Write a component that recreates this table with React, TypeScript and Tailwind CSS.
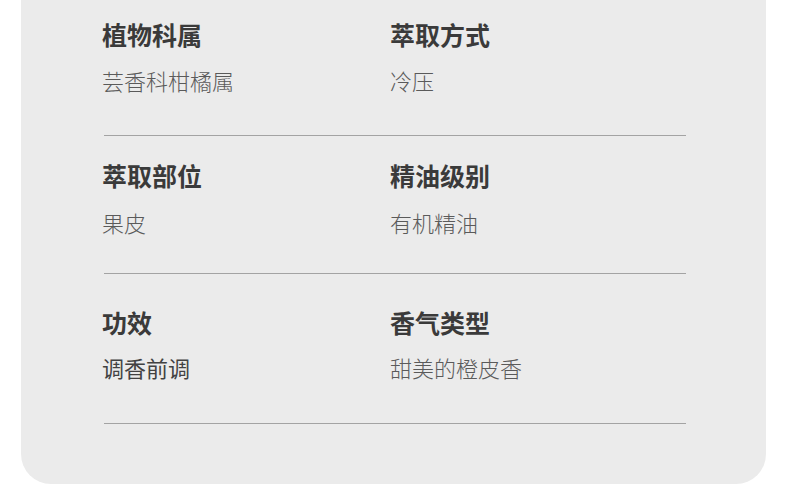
const rows = [
  {
    items: [
      { title: "植物科属", value: "芸香科柑橘属" },
      { title: "萃取方式", value: "冷压" },
    ],
    top: "pt-[16px]",
    gap: "mt-[13px]",
    bottom: "pb-[40px]",
  },
  {
    items: [
      { title: "萃取部位", value: "果皮" },
      { title: "精油级别", value: "有机精油" },
    ],
    top: "pt-[21px]",
    gap: "mt-[14px]",
    bottom: "pb-[36px]",
  },
  {
    items: [
      { title: "功效", value: "调香前调", dark: true },
      { title: "香气类型", value: "甜美的橙皮香" },
    ],
    top: "pt-[30px]",
    gap: "mt-[12px]",
    bottom: "pb-[41px]",
  },
];

export default function App() {
  return (
    <div
      className="w-full h-[503px] bg-white overflow-hidden"
      style={{ fontFamily: '"Noto Sans CJK SC", "Noto Sans", sans-serif' }}
    >
      <div className="ml-[21px] mr-[22px] h-[484px] bg-[#ebebeb] rounded-b-[30px] pl-[81px]">
        {rows.map((row, i) => (
          <div key={i}>
            <div className={`grid grid-cols-[288px_1fr] ${row.top} ${row.bottom}`}>
              {row.items.map((it) => (
                <div key={it.title} className="flex flex-col">
                  <div className="text-[25px] leading-[36px] font-bold text-[#3a3a3a]">
                    {it.title}
                  </div>
                  <div
                    className={
                      `${row.gap} text-[22px] leading-[30px] ` +
                      (it.dark ? "text-[#424242] font-normal" : "text-[#5a5a5a] font-light")
                    }
                  >
                    {it.value}
                  </div>
                </div>
              ))}
            </div>
            <div className="ml-[2px] w-[582px] h-px bg-[#a3a3a3]" />
          </div>
        ))}
      </div>
    </div>
  );
}
